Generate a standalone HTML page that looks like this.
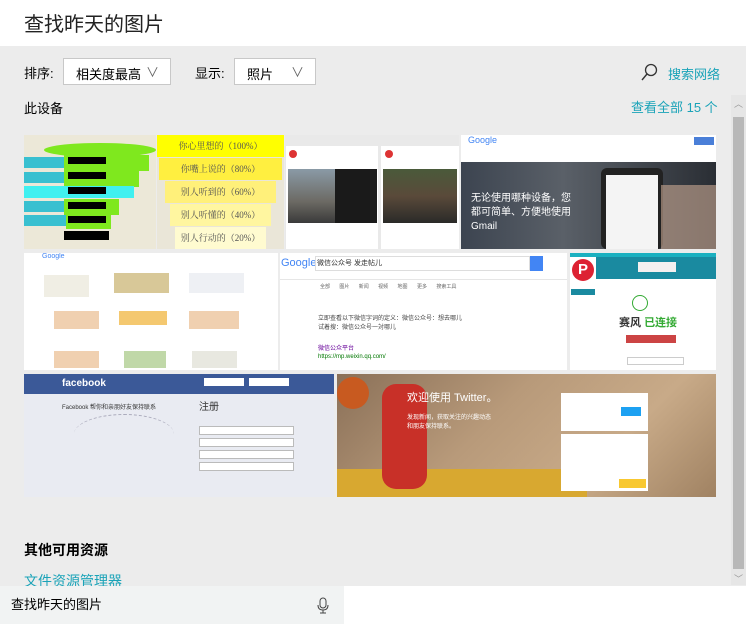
<!DOCTYPE html>
<html><head><meta charset="utf-8"><style>
*{margin:0;padding:0;box-sizing:border-box}
body{width:746px;height:624px;overflow:hidden;background:#ececec;font-family:"Liberation Sans","Noto Sans CJK SC",sans-serif;position:relative;color:#000}
.a{position:absolute}
.t{font-size:13px}
.link{color:#1aa3b8}
.box{background:#fff;border:1px solid #c8c8c8}
.ov{overflow:hidden}
.y{white-space:nowrap;text-align:center;line-height:22px;font-size:9px}
</style></head><body>
<div class="a" style="left:0;top:0;width:746px;height:46px;background:#fff"></div>
<div class="a" style="left:24px;top:8px;font-size:20px;color:#222">查找昨天的图片</div>

<div class="a t" style="left:24px;top:63px">排序:</div>
<div class="a box" style="left:63px;top:58px;width:108px;height:27px"><span class="a t" style="left:12px;top:5px">相关度最高</span><span class="a" style="left:82px;top:3px;font-size:13px;color:#666">∨</span></div>
<div class="a t" style="left:195px;top:63px">显示:</div>
<div class="a box" style="left:234px;top:58px;width:82px;height:27px"><span class="a t" style="left:12px;top:5px">照片</span><span class="a" style="left:56px;top:3px;font-size:13px;color:#666">∨</span></div>
<svg class="a" style="left:640px;top:63px" width="18" height="18"><circle cx="11" cy="7" r="5.5" fill="none" stroke="#333" stroke-width="1.3"/><path d="M7 11 L2 17" stroke="#333" stroke-width="1.4"/></svg>
<div class="a t link" style="left:668px;top:64px">搜索网络</div>
<div class="a t" style="left:24px;top:98px">此设备</div>
<div class="a t link" style="left:631px;top:97px">查看全部 15 个</div>

<div class="a" style="left:731px;top:95px;width:15px;height:490px;background:#e6e6e6"></div>
<div class="a" style="left:733px;top:117px;width:11px;height:452px;background:#b8b8b8"></div>
<div class="a" style="left:734px;top:97px;font-size:9px;color:#999">︿</div>
<div class="a" style="left:734px;top:572px;font-size:9px;color:#999">﹀</div>

<div class="a ov" style="left:24px;top:135px;width:132px;height:114px;background:#ece8d8">
 <div class="a" style="left:20px;top:8px;width:112px;height:14px;background:#7fe81e;border-radius:50%"></div>
 <div class="a" style="left:0;top:22px;width:60px;height:11px;background:#39c0d0"></div>
 <div class="a" style="left:40px;top:20px;width:85px;height:16px;background:#7fe81e"></div>
 <div class="a" style="left:0;top:37px;width:60px;height:11px;background:#39c0d0"></div>
 <div class="a" style="left:40px;top:36px;width:75px;height:16px;background:#7fe81e"></div>
 <div class="a" style="left:0;top:51px;width:110px;height:12px;background:#40f0f0"></div>
 <div class="a" style="left:0;top:66px;width:60px;height:11px;background:#39c0d0"></div>
 <div class="a" style="left:40px;top:64px;width:55px;height:16px;background:#7fe81e"></div>
 <div class="a" style="left:0;top:80px;width:60px;height:11px;background:#39c0d0"></div>
 <div class="a" style="left:42px;top:78px;width:45px;height:16px;background:#7fe81e"></div>
 <div class="a" style="left:44px;top:22px;width:38px;height:7px;background:#000"></div>
 <div class="a" style="left:44px;top:37px;width:38px;height:7px;background:#000"></div>
 <div class="a" style="left:44px;top:52px;width:38px;height:7px;background:#000"></div>
 <div class="a" style="left:44px;top:67px;width:38px;height:7px;background:#000"></div>
 <div class="a" style="left:44px;top:81px;width:38px;height:7px;background:#000"></div>
 <div class="a" style="left:40px;top:96px;width:45px;height:9px;background:#000"></div>
</div>
<div class="a ov" style="left:157px;top:135px;width:127px;height:114px;background:#eae6d8;font-family:'Liberation Serif','Noto Serif CJK SC',serif;color:#555">
 <div class="a y" style="left:0;top:0;width:127px;height:22px;background:#ffff00">你心里想的（100%）</div>
 <div class="a y" style="left:2px;top:23px;width:123px;height:22px;background:#ffef40">你嘴上说的（80%）</div>
 <div class="a y" style="left:8px;top:46px;width:111px;height:22px;background:#fff07a">别人听到的（60%）</div>
 <div class="a y" style="left:13px;top:69px;width:101px;height:22px;background:#fff6a0">别人听懂的（40%）</div>
 <div class="a y" style="left:18px;top:92px;width:91px;height:22px;background:#fffbd0">别人行动的（20%）</div>
</div>
<div class="a ov" style="left:285px;top:135px;width:174px;height:114px;background:#e9e9e9">
 <div class="a" style="left:1px;top:11px;width:92px;height:103px;background:#fff"></div>
 <div class="a" style="left:3px;top:34px;width:89px;height:54px;background:linear-gradient(#8a9aa6,#6c6a64 60%,#3a3a3a)"></div>
 <div class="a" style="left:50px;top:34px;width:42px;height:54px;background:#1a1a1a"></div>
 <div class="a" style="left:96px;top:11px;width:78px;height:103px;background:#fff"></div>
 <div class="a" style="left:98px;top:34px;width:74px;height:54px;background:linear-gradient(#4a5a3a,#5a4a3a 50%,#2a2a28)"></div>
 <div class="a" style="left:4px;top:15px;width:8px;height:8px;border-radius:50%;background:#d33"></div>
 <div class="a" style="left:100px;top:15px;width:8px;height:8px;border-radius:50%;background:#d33"></div>
</div>
<div class="a ov" style="left:461px;top:135px;width:255px;height:114px;background:#fff">
 <div class="a" style="left:7px;top:0;font-size:9px;color:#4285f4">Google</div>
 <div class="a" style="left:233px;top:2px;width:20px;height:8px;background:#4a7fd8"></div>
 <div class="a" style="left:0;top:27px;width:255px;height:87px;background:linear-gradient(90deg,#3c4450,#5a6068 40%,#2a2e34)"></div>
 <div class="a" style="left:10px;top:57px;font-size:10px;color:#fff;line-height:14px">无论使用哪种设备，您<br>都可简单、方便地使用<br>Gmail</div>
 <div class="a" style="left:140px;top:33px;width:62px;height:81px;background:#222;border-radius:6px"></div>
 <div class="a" style="left:145px;top:40px;width:52px;height:74px;background:#f4f4f4"></div>
 <div class="a" style="left:200px;top:50px;width:55px;height:64px;background:#c9a892;opacity:.6"></div>
</div>

<div class="a ov" style="left:24px;top:253px;width:254px;height:117px;background:#fff">
 <div class="a" style="left:18px;top:0;font-size:7px;color:#4285f4">Google</div>
 <div class="a" style="left:20px;top:22px;width:45px;height:22px;background:#f0eee4"></div>
 <div class="a" style="left:90px;top:20px;width:55px;height:20px;background:#d8c898"></div>
 <div class="a" style="left:165px;top:20px;width:55px;height:20px;background:#eef0f4"></div>
 <div class="a" style="left:30px;top:58px;width:45px;height:18px;background:#f0d0b0"></div>
 <div class="a" style="left:95px;top:58px;width:48px;height:14px;background:#f4c870"></div>
 <div class="a" style="left:165px;top:58px;width:50px;height:18px;background:#f0d0b0"></div>
 <div class="a" style="left:30px;top:98px;width:45px;height:17px;background:#f0d0b0"></div>
 <div class="a" style="left:100px;top:98px;width:42px;height:17px;background:#c0d8a8"></div>
 <div class="a" style="left:168px;top:98px;width:45px;height:17px;background:#e8e8e0"></div>
</div>
<div class="a ov" style="left:280px;top:253px;width:287px;height:117px;background:#fff">
 <div class="a" style="left:1px;top:4px;font-size:11px;color:#4285f4">Google</div>
 <div class="a" style="left:35px;top:3px;width:215px;height:15px;border:1px solid #ddd"></div>
 <div class="a" style="left:37px;top:5px;font-size:7px;color:#333">微信公众号  发走帖儿</div>
 <div class="a" style="left:250px;top:3px;width:13px;height:15px;background:#4285f4"></div>
 <div class="a" style="left:0;top:26px;width:287px;height:1px;background:#e6e6e6"></div>
 <div class="a" style="left:40px;top:30px;font-size:5px;color:#666;word-spacing:8px">全部 图片 新闻 视频 地图 更多 搜索工具</div>
 <div class="a" style="left:38px;top:60px;font-size:6px;color:#444">立即查看以下微信字词的定义：微信公众号：想去哪儿<br>试着搜：微信公众号一対哪儿</div>
 <div class="a" style="left:38px;top:92px;font-size:6px;color:#609;line-height:8px">微信公众平台<br><span style="color:#070">https://mp.weixin.qq.com/</span></div>
</div>
<div class="a ov" style="left:570px;top:253px;width:146px;height:117px;background:#fff">
 <div class="a" style="left:0;top:0;width:146px;height:4px;background:#1bb0c0"></div>
 <div class="a" style="left:26px;top:4px;width:120px;height:22px;background:#1a8aa0"></div>
 <div class="a" style="left:68px;top:9px;width:38px;height:10px;background:#f4f0f0"></div>
 <div class="a" style="left:2px;top:6px;width:22px;height:22px;border-radius:50%;background:#d23;color:#fff;font-weight:bold;font-size:15px;text-align:center;line-height:22px">P</div>
 <div class="a" style="left:1px;top:36px;width:24px;height:6px;background:#1a8aa0"></div>
 <div class="a" style="left:62px;top:42px;width:16px;height:16px;border:1.5px solid #3a3;border-radius:50%"></div>
 <div class="a" style="left:49px;top:61px;font-size:11px;font-weight:bold;color:#333">赛风 <span style="color:#3a3">已连接</span></div>
 <div class="a" style="left:56px;top:82px;width:50px;height:8px;background:#c44"></div>
 <div class="a" style="left:57px;top:104px;width:57px;height:8px;border:1px solid #ccc"></div>
</div>

<div class="a ov" style="left:24px;top:374px;width:310px;height:123px;background:#e9ebf2">
 <div class="a" style="left:0;top:0;width:310px;height:20px;background:#3b5998"></div>
 <div class="a" style="left:38px;top:4px;font-size:10px;font-weight:bold;color:#fff">facebook</div>
 <div class="a" style="left:180px;top:4px;width:40px;height:8px;background:#fff"></div>
 <div class="a" style="left:225px;top:4px;width:40px;height:8px;background:#fff"></div>
 <div class="a" style="left:38px;top:28px;font-size:6px;color:#333">Facebook 帮你和亲朋好友保持联系</div>
 <div class="a" style="left:50px;top:40px;width:100px;height:40px;border-top:1px dashed #aab;border-radius:50%"></div>
 <div class="a" style="left:175px;top:24px;font-size:10px;color:#333">注册</div>
 <div class="a" style="left:175px;top:52px;width:95px;height:9px;background:#fff;border:1px solid #bbb"></div>
 <div class="a" style="left:175px;top:64px;width:95px;height:9px;background:#fff;border:1px solid #bbb"></div>
 <div class="a" style="left:175px;top:76px;width:95px;height:9px;background:#fff;border:1px solid #bbb"></div>
 <div class="a" style="left:175px;top:88px;width:95px;height:9px;background:#fff;border:1px solid #bbb"></div>
</div>
<div class="a ov" style="left:337px;top:374px;width:379px;height:123px;background:linear-gradient(135deg,#8a7058,#b89a7a 40%,#c8aa88 70%,#a08262)">
 <div class="a" style="left:0;top:95px;width:250px;height:28px;background:#d8a830"></div>
 <div class="a" style="left:0;top:3px;width:32px;height:32px;border-radius:50%;background:#c85a20"></div>
 <div class="a" style="left:45px;top:10px;width:45px;height:105px;background:#c83028;border-radius:14px"></div>
 <div class="a" style="left:70px;top:15px;font-size:11px;color:#fff">欢迎使用 Twitter。</div>
 <div class="a" style="left:70px;top:40px;font-size:6px;color:#fff;line-height:9px">发现新闻，获取关注的兴趣动态<br>和朋友保持联系。</div>
 <div class="a" style="left:224px;top:19px;width:87px;height:38px;background:#fff"></div>
 <div class="a" style="left:284px;top:33px;width:20px;height:9px;background:#1da1f2"></div>
 <div class="a" style="left:224px;top:60px;width:87px;height:57px;background:#fff"></div>
 <div class="a" style="left:282px;top:105px;width:27px;height:9px;background:#f8c830"></div>
</div>

<div class="a" style="left:24px;top:540px;font-size:14px;font-weight:bold">其他可用资源</div>
<div class="a link" style="left:24px;top:571px;font-size:14px">文件资源管理器</div>

<div class="a" style="left:0;top:586px;width:344px;height:38px;background:#f1f3f3"></div>
<div class="a" style="left:344px;top:586px;width:402px;height:38px;background:#fff"></div>
<div class="a t" style="left:11px;top:594px">查找昨天的图片</div>
<svg class="a" style="left:316px;top:597px" width="14" height="18"><rect x="4" y="1" width="6" height="10" rx="3" fill="none" stroke="#444"/><path d="M2 8 Q2 13 7 13 Q12 13 12 8 M7 13 V16 M4 16 H10" fill="none" stroke="#444"/></svg>
</body></html>
